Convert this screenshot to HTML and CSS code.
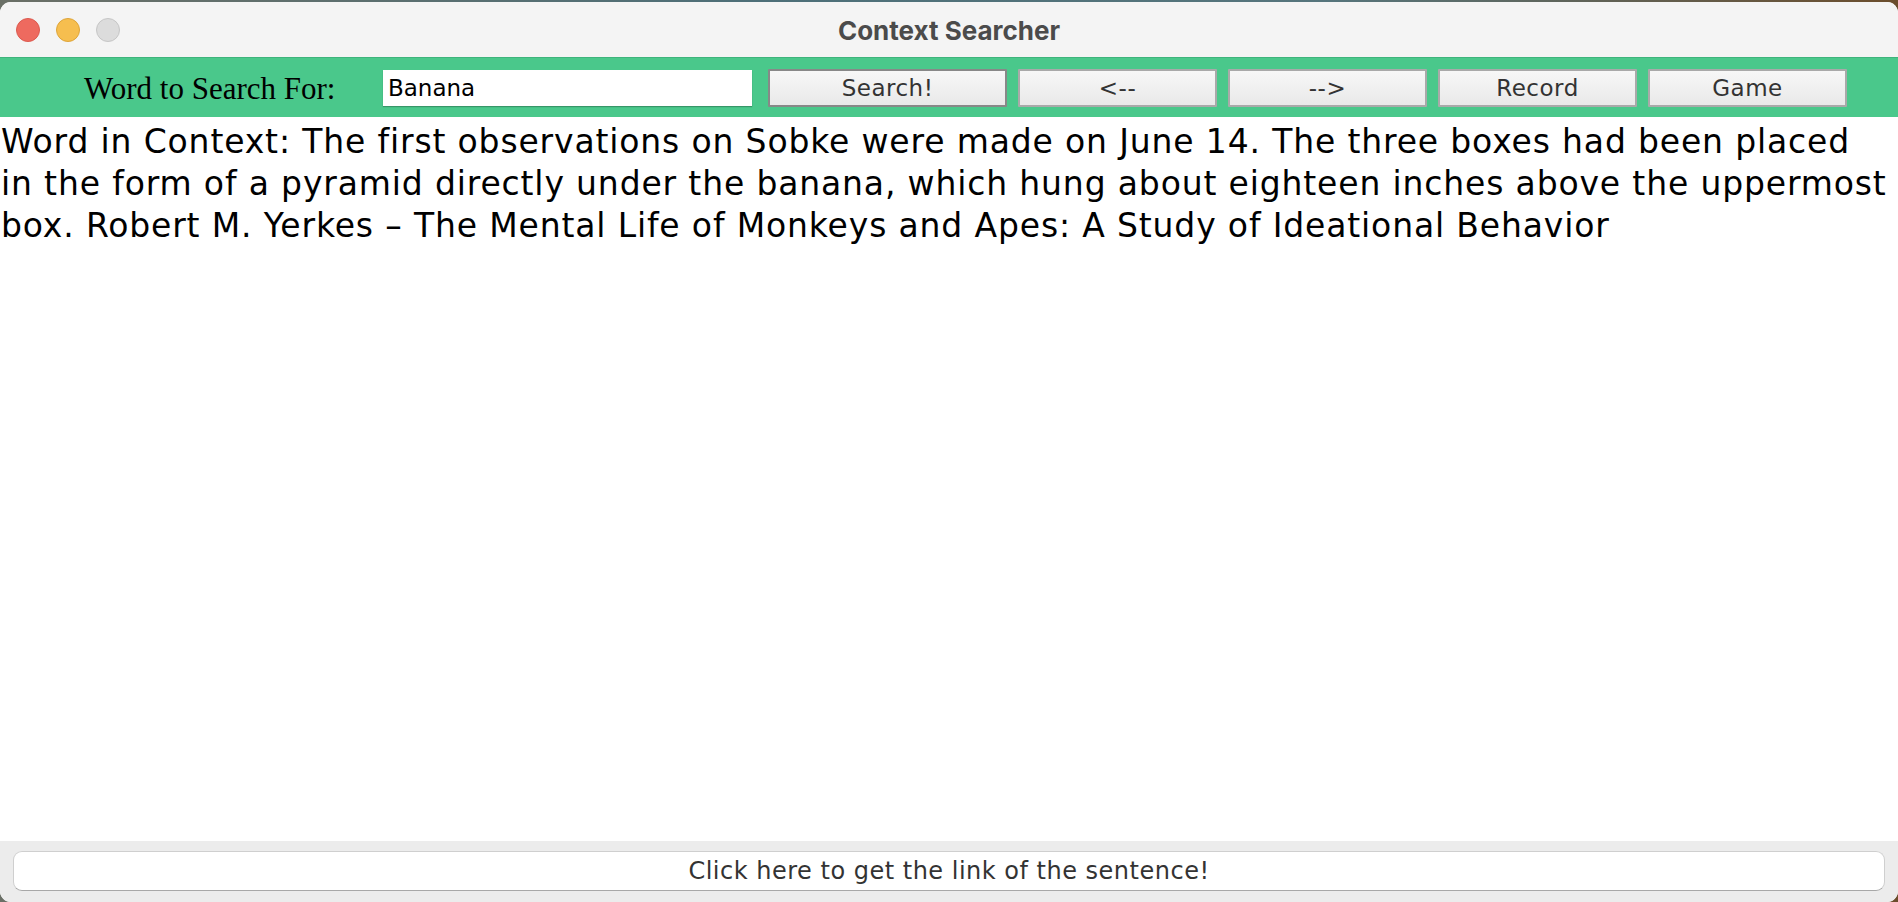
FILE: index.html
```html
<!DOCTYPE html>
<html>
<head>
<meta charset="utf-8">
<title>Context Searcher</title>
<link rel="stylesheet" href="styles.css">
</head>
<body>
<div class="window">
  <div class="titlebar">
    <div class="lights">
      <span class="light red"></span>
      <span class="light yellow"></span>
      <span class="light grey"></span>
    </div>
    <div class="title">Context Searcher</div>
  </div>
  <div class="toolbar">
    <span class="label">Word to Search For:</span>
    <input class="field" type="text" value="Banana">
    <button class="btn btn-default btn-search">Search!</button>
    <button class="btn btn-nav">&lt;--</button>
    <button class="btn btn-nav">--&gt;</button>
    <button class="btn btn-nav">Record</button>
    <button class="btn btn-nav">Game</button>
  </div>
  <div class="content">
    <p class="context">Word in Context: The first observations on Sobke were made on June 14. The three boxes had been placed<br>in the form of a pyramid directly under the banana, which hung about eighteen inches above the uppermost box. Robert M. Yerkes – The Mental Life of Monkeys and Apes: A Study of Ideational Behavior</p>
  </div>
  <div class="footer">
    <button class="link-btn">Click here to get the link of the sentence!</button>
  </div>
</div>
</body>
</html>
```

FILE: styles.css
```css
html, body {
  margin: 0;
  padding: 0;
  height: 100%;
}
body {
  background: linear-gradient(90deg, #6a6f66 0%, #4d6f78 40%, #56757c 70%, #6b4d2c 100%);
  overflow: hidden;
}
.window {
  margin-top: 2px;
  height: 900px;
  background: #ffffff;
  border-radius: 11px;
  overflow: hidden;
  display: flex;
  flex-direction: column;
}
.titlebar {
  height: 55px;
  background: #f4f4f4;
  display: flex;
  align-items: center;
  position: relative;
  border-bottom: 1px solid #3fb47c;
}
.lights {
  display: flex;
  gap: 16px;
  padding-left: 16px;
  padding-top: 1px;
}
.light {
  width: 22px;
  height: 22px;
  border-radius: 50%;
  box-sizing: content-box;
}
.red { background: #ee6a5f; border: 1px solid #dc5a4f; }
.yellow { background: #f6be4f; border: 1px solid #dea53a; }
.grey { background: #dcdcdc; border: 1px solid #c6c6c6; }
.title {
  position: absolute;
  left: 0;
  right: 0;
  top: 0;
  bottom: 0;
  display: flex;
  align-items: center;
  justify-content: center;
  font-family: Inter, "Liberation Sans", sans-serif;
  font-weight: 700;
  font-size: 26px;
  color: #4b4b4b;
  padding-top: 1px;
}
.toolbar {
  height: 59px;
  background: #4ac88b;
  display: flex;
  align-items: center;
  padding-left: 84px;
  box-sizing: border-box;
}
.label {
  font-family: "Liberation Serif", serif;
  font-size: 31px;
  color: #000;
  width: 299px;
  padding-top: 2px;
}
.field {
  width: 369px;
  height: 36px;
  box-sizing: border-box;
  border: none;
  margin: 0 16px 0 0;
  padding: 1px 5px 0;
  background: #fff;
  font-family: "DejaVu Sans", sans-serif;
  font-size: 23px;
  color: #000;
  box-shadow: 0 1px 1px rgba(0,0,0,0.25);
  outline: none;
}
.btn {
  height: 38px;
  box-sizing: border-box;
  background: linear-gradient(#f7f7f7, #e9e9e9);
  border: 2px solid #a9a9a9;
  border-radius: 1px;
  font-family: "DejaVu Sans", sans-serif;
  font-size: 23px;
  letter-spacing: 0.5px;
  color: #333;
  padding: 0;
  margin: 0 11px 0 0;
}
.btn-default {
  border-color: #888888;
}
.btn-search { width: 239px; }
.btn-nav { width: 199px; }
.content {
  flex: 1;
  background: #fff;
}
.context {
  margin: 0;
  padding: 4px 0 0 1px;
  font-family: "DejaVu Sans", sans-serif;
  font-size: 33px;
  letter-spacing: 0.85px;
  line-height: 42px;
  color: #000;
}
.footer {
  height: 61px;
  background: #ececec;
  display: flex;
  padding: 10px 13px 0;
  box-sizing: border-box;
}
.link-btn {
  flex: 1;
  height: 40px;
  background: #ffffff;
  border: 1px solid #cfcfcf;
  border-bottom-color: #a8a8a8;
  border-radius: 9px;
  font-family: "DejaVu Sans", sans-serif;
  font-size: 24px;
  letter-spacing: 0.5px;
  color: #333;
  padding: 0;
}
```
